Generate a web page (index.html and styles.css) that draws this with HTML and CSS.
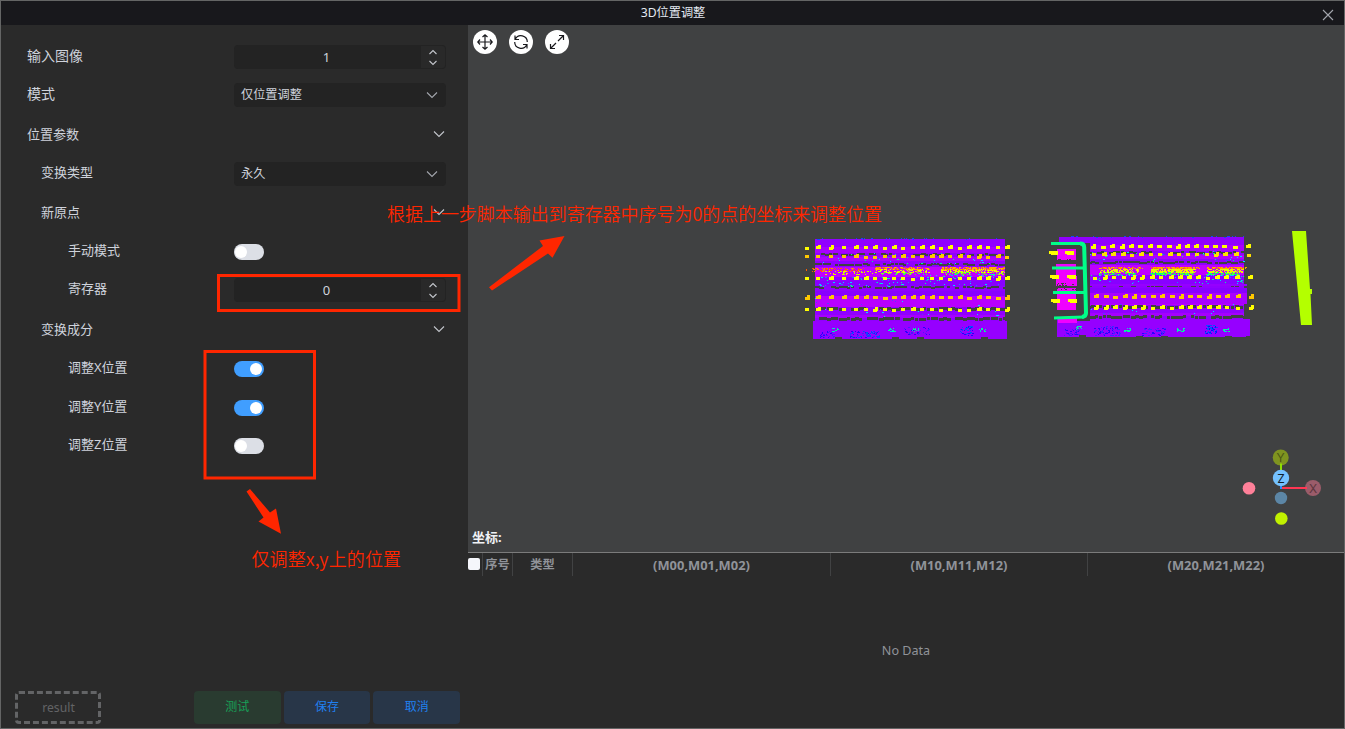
FILE: index.html
```html
<!DOCTYPE html>
<html lang="zh-CN">
<head>
<meta charset="utf-8">
<title>3D位置调整</title>
<link rel="stylesheet" href="styles.css">
</head>
<body>
<svg class="defs" width="0" height="0" aria-hidden="true">
  <symbol id="down" viewBox="0 0 12 12"><path d="M1 3.5 6 8.5 11 3.5" fill="none" stroke="currentColor" stroke-width="1.1"/></symbol>
  <symbol id="spin" viewBox="0 0 10 18"><path d="M1.500 6 5 2.500 8.500 6M1.500 13 5 16.500 8.500 13" fill="none" stroke="currentColor" stroke-width="1.100"/></symbol>
</svg>
<div class="window">
  <header class="titlebar">
    <span class="title">3D位置调整</span>
    <svg class="close" viewBox="0 0 12 12"><path d="M1 1 11 11M11 1 1 11" fill="none" stroke="#a3a6ad" stroke-width="1.1"/></svg>
  </header>
  <main class="content">
    <section class="panel">
      <div class="form">
        <div class="row big"><label>输入图像</label><div class="number"><span>1</span><i><svg><use href="#spin"/></svg></i></div></div>
        <div class="row big"><label>模式</label><div class="select"><span>仅位置调整</span><svg><use href="#down"/></svg></div></div>
        <div class="row group"><label>位置参数</label><svg><use href="#down"/></svg></div>
        <div class="row lv1"><label>变换类型</label><div class="select"><span>永久</span><svg><use href="#down"/></svg></div></div>
        <div class="row lv1 group"><label>新原点</label><svg><use href="#down"/></svg></div>
        <div class="row lv2"><label>手动模式</label><div class="switch"></div></div>
        <div class="row lv2"><label>寄存器</label><div class="number"><span>0</span><i><svg><use href="#spin"/></svg></i></div></div>
        <div class="row lv1 group"><label>变换成分</label><svg><use href="#down"/></svg></div>
        <div class="row lv2"><label>调整X位置</label><div class="switch on"></div></div>
        <div class="row lv2"><label>调整Y位置</label><div class="switch on"></div></div>
        <div class="row lv2"><label>调整Z位置</label><div class="switch"></div></div>
      </div>
      <footer class="actions">
        <div class="result">result</div>
        <div class="buttons">
          <div class="btn test">测试</div>
          <div class="btn">保存</div>
          <div class="btn">取消</div>
        </div>
      </footer>
    </section>
    <section class="right">
      <div class="viewport">
        <svg class="scene" viewBox="468 25 876 527">
          <g id="cloud" shape-rendering="crispEdges"></g>
          <g fill="none" stroke="#00ff88" stroke-width="3">
            <path d="M1051 243.500H1081"/>
            <path d="M1080 243.500Q1084 243.500 1084.200 247L1086 313Q1086 316.500 1082 317" stroke-width="4"/>
            <path d="M1084 317L1054 318M1052 268H1085M1053 292.500H1086"/>
          </g>
          <path fill="#b4ff00" d="M1292 231H1306L1310 289H1312V294H1310.500L1312 325H1301Z"/>
          <g class="gizmo">
            <path d="M1281 488V458" stroke="#8fe000" stroke-width="2"/>
            <path d="M1281 488H1313" stroke="#ff3653" stroke-width="2"/>
            <circle cx="1280.700" cy="457.500" r="8" fill="#7f9420"/>
            <path d="M1281 463.500V471" stroke="#8fe000" stroke-width="2"/>
            <circle cx="1313" cy="488" r="8" fill="#9b5c6a"/>
            <path d="M1305 488H1307" stroke="#ff3653" stroke-width="2"/>
            <path d="M1281 485V489" stroke="#2c8fff" stroke-width="2"/>
            <circle cx="1281" cy="478" r="8.200" fill="#74c1ff"/>
            <circle cx="1281" cy="498" r="6.200" fill="#5c86a6"/>
            <circle cx="1249" cy="488.200" r="6.300" fill="#ff8099"/>
            <circle cx="1281.300" cy="518.500" r="6.300" fill="#c0f000"/>
            <text x="1280.700" y="462" fill="#4b5713">Y</text>
            <text x="1281" y="482.500" fill="#10202c">Z</text>
            <text x="1313" y="492.500" fill="#5c363e">X</text>
          </g>
        </svg>
        <div class="tools">
          <span><svg viewBox="0 0 16 16"><path d="M8 .5V15.500M.5 8H15.500M5.500 3 8 .8 10.500 3M5.500 13 8 15.200 10.500 13M3 5.500.8 8 3 10.500M13 5.500 15.200 8 13 10.500"/></svg></span>
          <span><svg viewBox="0 0 16 16"><path d="M2 1.500V5.500H6M2.300 5.300A6.300 6.300 0 0 1 14.300 8M14 14.500V10.500H10M13.700 10.700A6.300 6.300 0 0 1 1.700 8"/></svg></span>
          <span><svg viewBox="0 0 16 16"><path d="M1.500 14.500 7 9M9 7 14.500 1.500M10 1.500H14.500V6M1.500 10V14.500H6"/></svg></span>
        </div>
        <div class="coord">坐标:</div>
      </div>
      <div class="thead">
        <div><b class="check"></b></div><div class="zh">序号</div><div class="zh">类型</div>
        <div>(M00,M01,M02)</div><div>(M10,M11,M12)</div><div>(M20,M21,M22)</div>
      </div>
      <div class="empty">No Data</div>
    </section>
  </main>
  <svg class="notes" viewBox="0 0 1345 729">
    <path d="M15 .5h3" stroke="#35a035"/>
    <path d="M1004 .5h54M1072 .5h22M1106 .5h56M1168 .5h20M1200 .5h28M1240 .5h19M1274 .5h43" stroke="#a63cff"/>
    <path d="M1034 .5h7M1063 .5h3M1135 .5h2M1140 .5h1M1153 .5h2M1161 .5h1" stroke="#f0f028"/>
    <path d="M120 728.500h18" stroke="#2d7fb0"/>
    <g fill="none" stroke="#ff2600" stroke-width="3">
      <rect x="218.500" y="275.500" width="240.500" height="35"/>
      <rect x="205" y="351.500" width="109.500" height="126.500"/>
    </g>
    <g fill="#ff2600">
      <path d="M489 287.300 543 246 539.500 240.500 564.500 236 552.500 257.800 548 253.500 492 290.500Z"/>
      <path d="M246.500 491.500 250 489 270 512.500 276 508.500 281 533.800 258.500 521.500 263.500 517.500Z"/>
    </g>
    <g class="note">
      <text x="387" y="220.500" textLength="495">根据上一步脚本输出到寄存器中序号为0的点的坐标来调整位置</text>
      <text x="251.500" y="566" textLength="149.500">仅调整x,y上的位置</text>
    </g>
  </svg>
</div>
<script src="cloud.js"></script>
</body>
</html>
```

FILE: styles.css
```css
* { box-sizing: border-box; }
body {
  margin: 0;
  background: #2a2a2a;
  color: #cfd3dc;
  font: 13px/18px "Noto Sans", "Noto Sans CJK SC", sans-serif;
}
.defs { position: absolute; }
.window {
  position: relative;
  width: 1345px;
  height: 729px;
  border: 1px solid #646565;
  display: flex;
  flex-direction: column;
  overflow: hidden;
}
.titlebar {
  height: 24px;
  flex: none;
  background: #18181c;
  display: grid;
  grid-template-columns: 1fr auto 1fr;
  align-items: center;
  color: #e5eaf3;
  font-size: 12.2px;
}
.title { grid-column: 2; padding-left: 1px; }
.close { justify-self: end; width: 12px; height: 12px; margin: 4px 10px 0 0; }
.content { flex: 1; display: flex; min-height: 0; }
.panel {
  width: 467px;
  flex: none;
  display: flex;
  flex-direction: column;
  justify-content: space-between;
  padding: 13px 8px 4px 14px;
}
.form {
  display: grid;
  grid-template-rows: 38px 38px 40px 40px 36px 44px 32px 46px 34px 44px 32px;
  padding: 0 14px 0 12px;
}
.row { display: grid; grid-template-columns: 207px 212px; align-items: center; }
.row label { padding-bottom: 2px; }
.big label { font-size: 14px; }
.lv1 label { padding: 0 0 4px 14px; }
.lv2 label { padding: 0 0 4px 41px; }
.group label { padding-bottom: 0; }
.group svg { justify-self: end; width: 12px; height: 12px; margin-right: 1px; color: #c3c6cc; }
.number, .select {
  height: 24px;
  border-radius: 4px;
  background: #232323;
  display: flex;
  align-items: center;
}
.number span { flex: 1; text-align: center; padding: 0 2px 1px 0; }
.number i {
  width: 24px;
  height: 22px;
  margin-right: 1px;
  background: #292929;
  border-radius: 0 3px 3px 0;
  display: flex;
  align-items: center;
  justify-content: center;
}
.number svg { width: 10px; height: 18px; color: #c3c6cc; }
.select { padding: 0 8px 0 7px; justify-content: space-between; font-size: 12.2px; }
.select svg { width: 12px; height: 12px; color: #a3a6ad; }
.switch { width: 30px; height: 16px; padding: 2px; border-radius: 8px; background: #dcdfe6; display: flex; }
.switch:not(.on) { padding-left: 1px; }
.switch::before { content: ""; width: 12px; height: 12px; border-radius: 50%; background: #fff; }
.switch.on { background: #409eff; justify-content: flex-end; }
.actions { display: flex; justify-content: space-between; font-size: 12px; }
.result {
  width: 86px;
  height: 33px;
  border: 3px dashed #636466;
  border-radius: 4px;
  color: #636466;
  display: grid;
  place-items: center;
  padding-left: 1px;
  font-size: 12.2px;
}
.buttons { display: flex; gap: 3px; }
.btn {
  width: 86.67px;
  height: 33px;
  border-radius: 4px;
  background: #283648;
  color: #2080f0;
  display: grid;
  place-items: center;
  padding-bottom: 1px;
}
.btn.test { background: #293b30; color: #18a058; }
.right { flex: 1; display: flex; flex-direction: column; min-width: 0; }
.viewport {
  height: 528px;
  position: relative;
  background: #404142;
  border-bottom: 1px solid #7b7b7b;
  display: flex;
  flex-direction: column;
  justify-content: space-between;
}
.scene { position: absolute; left: 0; top: 0; width: 876px; height: 527px; }
.gizmo text { font: 12px Inter, sans-serif; text-anchor: middle; }
.tools { display: flex; gap: 12px; padding: 5px; position: relative; }
.tools span {
  width: 24px;
  height: 24px;
  border-radius: 50%;
  background: #fff;
  display: grid;
  place-items: center;
}
.tools svg { width: 16px; height: 16px; fill: none; stroke: #18181c; stroke-width: 1.2; }
.coord { position: relative; padding: 0 4px 6px; font-size: 13px; font-weight: 700; color: #f0f2f5; }
.thead {
  display: grid;
  grid-template-columns: 15px 30px 60px 258px 257px 1fr;
  height: 23px;
  color: #909399;
  font-size: 12.9px;
  font-weight: 700;
}
.thead div { display: grid; place-items: center; border-right: 1px solid #414243; white-space: nowrap; }
.thead .zh { font-size: 12.2px; }
.thead div:last-child { border: 0; }
.thead .check { width: 12px; height: 12px; border-radius: 2px; background: #f5f6fb; margin: 0 2px 1px 0; }
.empty { flex: 1; display: grid; place-items: center; color: #909399; padding-bottom: 3px; font-size: 12.6px; }
.notes { position: absolute; left: -1px; top: -1px; width: 1345px; height: 729px; }
.note text { font: 18px "Noto Sans CJK SC", sans-serif; font-weight: 350; fill: #ff2600; }
```

FILE: cloud.js
```js
// Builds the height-coloured point cloud of the two pallets.
const layer = document.getElementById('cloud');
let seed = 71;
const rnd = () => (seed = (seed * 16807) % 2147483647) / 2147483647;
const order = [];
function box(color, x, y, w, h) {
  const last = order[order.length - 1];
  const d = `M${x.toFixed(1)} ${y.toFixed(1)}h${w}v${h}h${-w}z`;
  if (last && last.color === color) last.d += d;
  else order.push({ color, d });
}
function noise(colors, x0, x1, y0, y1, count) {
  colors.forEach(c => {
    for (let i = 0; i < count / colors.length; i++) {
      box(c, Math.floor(x0 + rnd() * (x1 - x0)), Math.floor(y0 + rnd() * (y1 - y0)), rnd() < 0.3 ? 2 : 1, 1);
    }
  });
}
function ragged(x0, x1, y, h, density) {
  for (let x = x0; x < x1; x += 4) {
    if (rnd() < density) box('#404142', x, y + Math.floor(rnd() * 2), 3 + Math.floor(rnd() * 3), h);
  }
}
function pallet(x0, x1, dy) {
  const w = x1 - x0;
  box('#9000ff', x0, 239 + dy, w, 82);
  box('#a800ff', x0, 247 + dy, w, 6);
  box('#ae00ff', x0, 257 + dy, w, 4);
  box('#c000ff', x0, 267 + dy, w, 10);
  box('#8800ff', x0, 281 + dy, w, 5);
  box('#8800ff', x0, 291 + dy, w, 5);
  box('#b800ff', x0, 296 + dy, w, 11);
  box('#a500ff', x0, 315 + dy, w, 3);
  ragged(x0 + 6, x1, 253 + dy, 2, 0.75);
  ragged(x0, x1, 263 + dy, 2, 0.9);
  ragged(x0, x1, 286 + dy, 2, 0.75);
  ragged(x0, x1, 307 + dy, 3, 0.8);
  ragged(x0, x1, 317 + dy, 3, 0.9);
  box('#9600ff', x0 - 2, 321 + dy, w + 4, 18);
  noise(['#00e5ff', '#00ff88', '#3050ff'], x0, x1, 253 + dy, 264 + dy, 45);
  noise(['#00d5ff', '#00ff99', '#2878ff'], x0, x1, 277 + dy, 287 + dy, 75);
  noise(['#00e5ff', '#5540ff'], x0, x1, 298 + dy, 317 + dy, 30);
  noise(['#2a00ff', '#3c28ff', '#0050ff'], x0 + 35, x0 + 65, 331 + dy, 338 + dy, 90);
  noise(['#2a00ff', '#4a18ff'], x0 + 5, x0 + 20, 331 + dy, 338 + dy, 35);
  noise(['#2a00ff', '#4a18ff'], x0 + 88, x0 + 115, 327 + dy, 335 + dy, 35);
  noise(['#2400ff', '#0055ff'], x0 + 145, x0 + 158, 326 + dy, 336 + dy, 45);
  [17, 73, 97, 164].forEach(x => noise(['#00e0c8', '#00ff88'], x0 + x, x0 + x + 7, 328 + dy, 332 + dy, 12));
  noise(['#1048ff'], x0, x1, 238 + dy, 240 + dy, 26);
  // Notches along the lower edge
  [20, 77, 102, 166].forEach(x => box('#404142', x0 + x, 337 + dy, 7, 2));
}
function marks(xs, base, rows) {
  rows.forEach(([y, color, shift, w]) => xs.forEach(z => {
    const x = base + z / 3 + shift;
    box(color, Math.round(x - 2), y - 1 + (rnd() < 0.3 ? 1 : 0), w, 3);
    if (rnd() < 0.5) box(color, Math.round(x), y - 2, 3, 4);
  }));
}

pallet(815, 1005, 0);
noise(['#ff5a00', '#ff9000'], 812, 865, 268, 272, 75);
[[875, 930, 0.7], [941, 1006, 1.2]].forEach(([a, b, k]) => {
  noise(['#ffe000', '#e0ff00'], a, b, 269, 273, 140 * k);
  noise(['#ff8000', '#ffb000'], a, b, 267, 270, 140 * k);
  noise(['#b0ff00', '#40ff50'], a + 3, b - 3, 272, 275, 50 * k);
});
noise(['#ffe000', '#c8ff00'], 825, 875, 271, 275, 40);
noise(['#00ffb0', '#00d0ff'], 920, 1000, 274, 278, 30);
marks([50, 85, 124, 161, 199, 229, 256, 285, 312, 340, 368, 397, 425, 454, 481, 510, 538, 566, 593, 623, 650], 790, [
  [247, '#ffff00', 0, 4], [256, '#ffc800', 0, 4], [278, '#ffff00', 0, 4], [297, '#ffc800', 0, 5], [309, '#ffff00', 0, 4]
]);
box('#ff6000', 806, 269, 1, 2);

pallet(1059, 1244, -2);
box('#404142', 1059, 241, 31, 80);
box('#9000ff', 1059, 237, 31, 6);
box('#9600ff', 1090, 284, 157, 2);
box('#a800ff', 1090, 288, 157, 16);
box('#8800ff', 1090, 288, 157, 5);
box('#9600ff', 1090, 319, 160, 17);
noise(['#2a00ff', '#3c28ff'], 1094, 1120, 326, 336, 90);
noise(['#2a00ff', '#3c28ff'], 1142, 1165, 328, 336, 55);
noise(['#1800ff', '#0055ff'], 1205, 1217, 325, 334, 65);
[1124, 1177, 1223].forEach(x => noise(['#00e0c8', '#00ff88'], x, x + 7, 328, 332, 16));
// Height ramps slant from orange at the top to cyan at the bottom
[[1099, 1143, 0.7], [1151, 1200, 1.5], [1207, 1247, 1]].forEach(([a, b, k]) => {
  noise(['#60ff30', '#00ff80'], a - 1, b - 7, 272, 275, 80 * k);
  noise(['#ffe000', '#d8ff00'], a, b - 4, 269, 273, 130 * k);
  noise(['#ff8000', '#ffa500'], a, b, 267, 269, 90 * k);
  noise(['#00d8ff'], a, b - 10, 275, 276, 14);
});
// Items held by the bracket
[[1057, 249, 19, 11], [1056, 264, 20, 12], [1056, 276, 21, 10], [1057, 288, 19, 22], [1058, 318, 19, 5]].forEach(b => box('#f000ff', ...b));
noise(['#404142'], 1056, 1076, 259, 264, 30);
noise(['#404142'], 1056, 1076, 283, 290, 30);
[[1049, 251], [1065, 251], [1050, 275], [1067, 275], [1051, 299], [1068, 299]].forEach(([x, y]) => {
  box('#ffff00', x, y, 9, 3);
  box('#ffff00', x + 2, y + 2, 7, 2);
});
marks([175, 204, 232, 260, 288, 316, 344, 372, 401, 428, 456, 484, 512, 540, 568, 600, 640], 1035, [
  [246, '#ffff00', 0, 5], [254, '#ffe000', 1, 4], [277, '#ffff00', 2, 4], [296, '#ffc800', 3, 5], [307, '#ffff00', 3, 4]
]);

layer.innerHTML = order.map(o => `<path fill="${o.color}" d="${o.d}"/>`).join('');
```
